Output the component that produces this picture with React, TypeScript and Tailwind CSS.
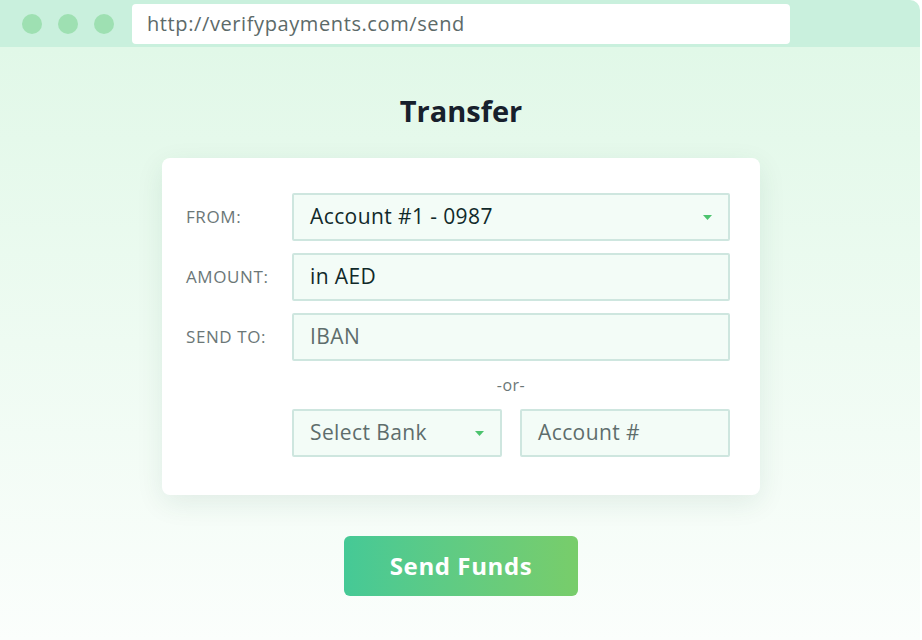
import React from "react";

const font = { fontFamily: "'Open Sans', 'Noto Sans', sans-serif" };

function Caret() {
  return (
    <svg width="9" height="5" viewBox="0 0 9 5" className="shrink-0">
      <polygon points="0,0 9,0 4.5,5" fill="#4cc36e" />
    </svg>
  );
}

function Field({ text, muted, select, className }: { text: string; muted?: boolean; select?: boolean; className?: string }) {
  return (
    <div
      className={`h-12 flex items-center justify-between pl-4 pr-4 border-2 border-[#cee6df] bg-[#f3fcf7] rounded-[2px] text-[21px] tracking-[0.4px] ${
        muted ? "text-[#5e6d6c]" : "text-[#10292a]"
      } ${className ?? ""}`}
    >
      <span>{text}</span>
      {select && <Caret />}
    </div>
  );
}

function Label({ text }: { text: string }) {
  return <div className="text-[17px] tracking-[0.6px] text-[#6b7777] flex items-center h-12">{text}</div>;
}

export default function App() {
  return (
    <div className="w-[922px] h-[640px] bg-white" style={font}>
      <div className="w-[920px] h-full flex flex-col rounded-tr-[10px] overflow-hidden">
        <div className="h-[47px] shrink-0 bg-[#c9f0dd] flex items-center pl-[22px]">
          <div className="flex gap-4">
            <div className="w-5 h-5 rounded-full bg-[#9ee0b2]" />
            <div className="w-5 h-5 rounded-full bg-[#9ee0b2]" />
            <div className="w-5 h-5 rounded-full bg-[#9ee0b2]" />
          </div>
          <div className="ml-[18px] w-[658px] h-10 bg-white rounded-[4px] flex items-center pl-[15px] text-[20px] tracking-[0.6px] text-[#5c6a69]">
            http://verifypayments.com/send
          </div>
        </div>

        <div className="flex-1 bg-gradient-to-b from-[#e1f8e8] to-[#fbfefc] flex flex-col items-center pl-[2px]">
          <h1 className="mt-[46px] h-9 leading-9 text-[29px] font-bold text-[#17202c]">Transfer</h1>

          <div className="mt-[29px] w-[598px] bg-white rounded-lg shadow-[0_8px_28px_rgba(20,80,50,0.09)] pl-6 pr-[30px] pt-[35px] pb-[38px]">
            <div className="grid grid-cols-[106px_1fr] gap-y-3">
              <Label text="FROM:" />
              <Field text="Account #1 - 0987" select />
              <Label text="AMOUNT:" />
              <Field text="in AED" />
              <Label text="SEND TO:" />
              <Field text="IBAN" muted />
              <div />
              <div className="h-6 flex items-center justify-center text-[16px] tracking-[0.5px] text-[#6b7777]">-or-</div>
              <div />
              <div className="flex gap-[18px]">
                <Field text="Select Bank" muted select className="w-[210px]" />
                <Field text="Account #" muted className="flex-1" />
              </div>
            </div>
          </div>

          <button className="mt-[41px] w-[234px] h-[60px] rounded-md bg-gradient-to-r from-[#45c996] to-[#78cd6a] text-white text-[24px] font-bold tracking-[0.6px]">
            Send Funds
          </button>
        </div>
      </div>
    </div>
  );
}
